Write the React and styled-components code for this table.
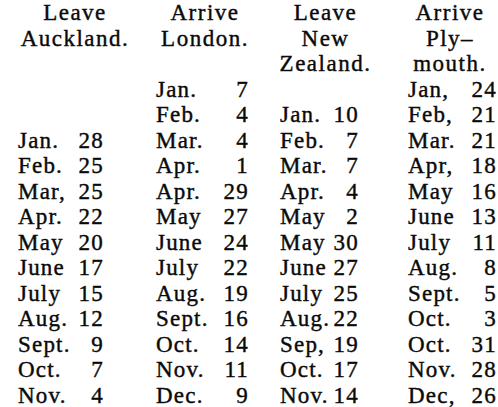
import styled, { createGlobalStyle } from 'styled-components';

const GlobalStyle = createGlobalStyle`
  html, body {
    margin: 0;
    padding: 0;
    background: #ffffff;
  }
`;

const Sheet = styled.div`
  width: 498px;
  height: 407px;
  overflow: hidden;
  display: grid;
  grid-template-columns: 150px 120px 125px 103px;
  font-family: "Liberation Serif", "Times New Roman", serif;
  font-size: 23px;
  line-height: 25.5px;
  color: #0a0a0a;
  letter-spacing: 1.2px;
  -webkit-text-stroke: 0.4px #0a0a0a;
`;

const Column = styled.div`
  display: flex;
  flex-direction: column;
`;

const HeadLine = styled.div`
  height: 25.5px;
  text-align: center;
  letter-spacing: 1.5px;
  padding-left: ${(p) => p.$shift > 0 ? p.$shift : 0}px;
  padding-right: ${(p) => p.$shift < 0 ? -p.$shift : 0}px;
  white-space: nowrap;
`;

const Blank = styled.div`
  height: ${(p) => p.$n * 25.5}px;
`;

const Cell = styled.div`
  height: 25.5px;
  display: flex;
  justify-content: space-between;
  margin-left: ${(p) => p.$left}px;
  width: ${(p) => p.$width}px;
  white-space: nowrap;
`;

const columns = [
  {
    head: ['Leave', 'Auckland.'],
    shift: 0,
    left: 18,
    width: 86,
    blank: 3,
    rows: [
      ['Jan.', '28'], ['Feb.', '25'], ['Mar,', '25'], ['Apr.', '22'],
      ['May', '20'], ['June', '17'], ['July', '15'], ['Aug.', '12'],
      ['Sept.', '9'], ['Oct.', '7'], ['Nov.', '4'],
    ],
  },
  {
    head: ['Arrive', 'London.'],
    shift: -10,
    left: 6,
    width: 93,
    blank: 1,
    rows: [
      ['Jan.', '7'], ['Feb.', '4'], ['Mar.', '4'], ['Apr.', '1'],
      ['Apr.', '29'], ['May', '27'], ['June', '24'], ['July', '22'],
      ['Aug.', '19'], ['Sept.', '16'], ['Oct.', '14'], ['Nov.', '11'],
      ['Dec.', '9'],
    ],
  },
  {
    head: ['Leave', 'New', 'Zealand.'],
    shift: -14,
    left: 10,
    width: 79,
    blank: 1,
    rows: [
      ['Jan.', '10'], ['Feb.', '7'], ['Mar.', '7'], ['Apr.', '4'],
      ['May', '2'], ['May', '30'], ['June', '27'], ['July', '25'],
      ['Aug.', '22'], ['Sep,', '19'], ['Oct.', '17'], ['Nov.', '14'],
    ],
  },
  {
    head: ['Arrive', 'Ply\u2013', 'mouth.'],
    shift: 7,
    left: 13,
    width: 89,
    blank: 0,
    rows: [
      ['Jan,', '24'], ['Feb,', '21'], ['Mar.', '21'], ['Apr,', '18'],
      ['May', '16'], ['June', '13'], ['July', '11'], ['Aug.', '8'],
      ['Sept.', '5'], ['Oct.', '3'], ['Oct.', '31'], ['Nov.', '28'],
      ['Dec,', '26'],
    ],
  },
];

export default function App() {
  return (
    <>
      <GlobalStyle />
      <Sheet>
        {columns.map((col, i) => (
          <Column key={i}>
            {col.head.map((h) => (
              <HeadLine key={h} $shift={col.shift}>{h}</HeadLine>
            ))}
            {col.blank > 0 && <Blank $n={col.blank} />}
            {col.rows.map(([m, d], j) => (
              <Cell key={j} $left={col.left} $width={col.width}>
                <span>{m}</span>
                <span>{d}</span>
              </Cell>
            ))}
          </Column>
        ))}
      </Sheet>
    </>
  );
}
